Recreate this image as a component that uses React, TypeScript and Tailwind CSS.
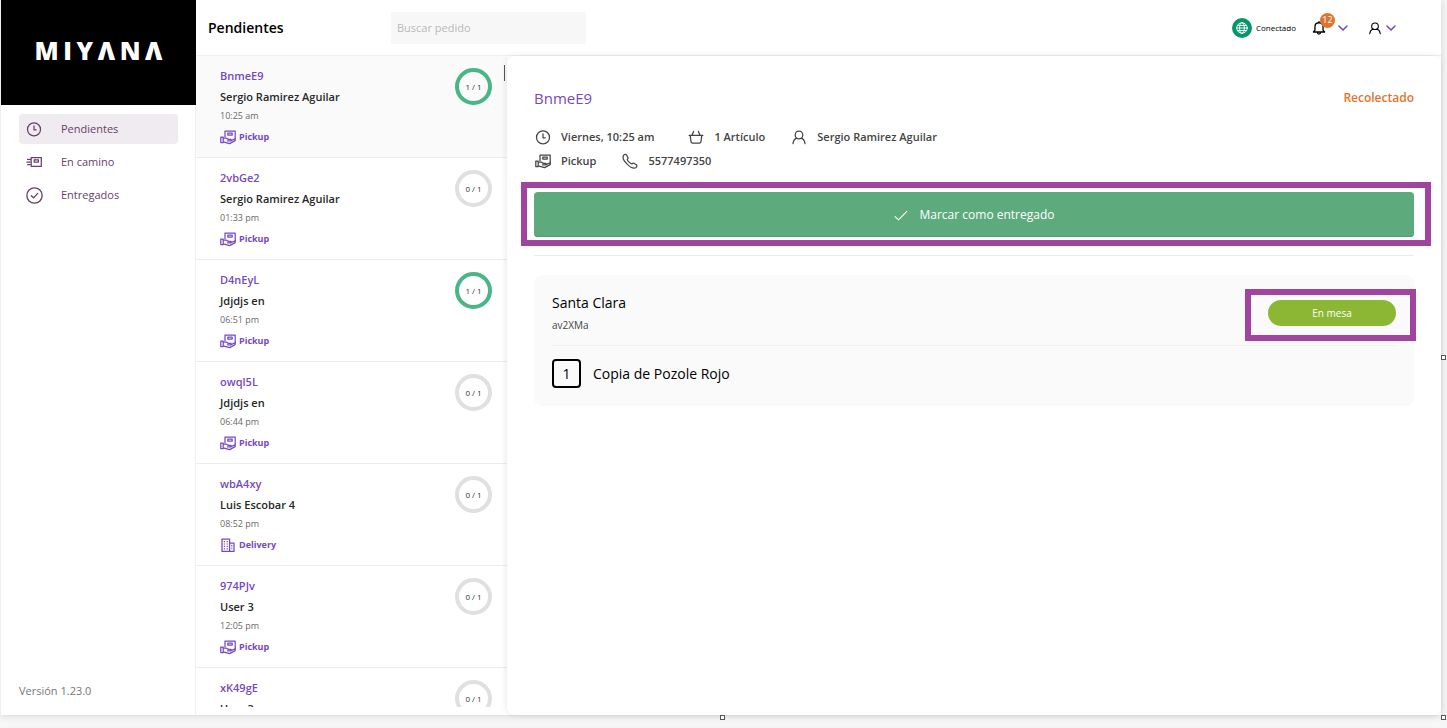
import React from "react";

type Mode = "Pickup" | "Delivery";

interface Order {
  code: string;
  name: string;
  time: string;
  mode: Mode;
  ready: number;
  total: number;
}

const orders: Order[] = [
  { code: "BnmeE9", name: "Sergio Ramirez Aguilar", time: "10:25 am", mode: "Pickup", ready: 1, total: 1 },
  { code: "2vbGe2", name: "Sergio Ramirez Aguilar", time: "01:33 pm", mode: "Pickup", ready: 0, total: 1 },
  { code: "D4nEyL", name: "Jdjdjs en", time: "06:51 pm", mode: "Pickup", ready: 1, total: 1 },
  { code: "owql5L", name: "Jdjdjs en", time: "06:44 pm", mode: "Pickup", ready: 0, total: 1 },
  { code: "wbA4xy", name: "Luis Escobar 4", time: "08:52 pm", mode: "Delivery", ready: 0, total: 1 },
  { code: "974PJv", name: "User 3", time: "12:05 pm", mode: "Pickup", ready: 0, total: 1 },
  { code: "xK49gE", name: "User 3", time: "12:05 pm", mode: "Pickup", ready: 0, total: 1 },
];

interface IconProps {
  className?: string;
  children?: React.ReactNode;
}

function Icon({ className = "size-4", children }: IconProps) {
  return (
    <svg viewBox="0 0 16 16" className={`shrink-0 ${className}`} fill="none" stroke="currentColor" strokeWidth="1.25" strokeLinecap="round" strokeLinejoin="round" aria-hidden="true">
      {children}
    </svg>
  );
}

const ClockIcon = ({ className }: IconProps) => (
  <Icon className={className}>
    <circle cx="8" cy="8.4" r="6.5" />
    <path d="M8 4.8V8.8H10.2" />
  </Icon>
);

const ShippingIcon = ({ className }: IconProps) => (
  <Icon className={className}>
    <path d="M5.2 3.5H15.3V12.4H5.2zM8.2 5.8H12.4V8H8.2zM1.6 5.4H4M.8 8H4M1.6 10.6H4" />
  </Icon>
);

const DoneIcon = ({ className }: IconProps) => (
  <Icon className={className}>
    <circle cx="8" cy="8" r="7.2" />
    <path d="M5 8.2L7.1 10.2L11 6" />
  </Icon>
);

const PickupIcon = ({ className }: IconProps) => (
  <Icon className={className}>
    <path d="M5 7.8V2H15.2V10M7.8 4.2H12.2V6H7.8z" />
    <path d="M.8 8H3.2V13.6H.8zM3.2 9H6.2L8.4 10.4H11V11.8H7.4M11 11.6L15.2 9.8V11.6L9.6 14.6L3.2 12.8" />
  </Icon>
);

const BuildingIcon = ({ className }: IconProps) => (
  <Icon className={className}>
    <path d="M2 2H9.6V14.4H2zM9.6 6H14V14.4H9.6" />
    <path strokeDasharray="1.2 1.2" strokeLinecap="butt" d="M4.4 4V13M7.2 4V13M11.8 8V13" />
  </Icon>
);

const BasketIcon = ({ className }: IconProps) => (
  <Icon className={className}>
    <path d="M1.2 6.4H14.8M2.2 6.4L3 12.6Q3.2 14 4.6 14H11.4Q12.8 14 13 12.6L13.8 6.4M4 6.2L5.6 2.4M12 6.2L10.4 2.4" />
  </Icon>
);

const PersonIcon = ({ className }: IconProps) => (
  <Icon className={className}>
    <circle cx="8" cy="6" r="3.8" />
    <path d="M2 14.6C2.4 11.6 4 9.8 5.8 9.2M14 14.6C13.6 11.6 12 9.8 10.2 9.2" />
  </Icon>
);

const PhoneIcon = ({ className }: IconProps) => (
  <Icon className={className}>
    <path d="M1.4 2.6C2.4 1.2 3.8 1 4.4 1.8L6 4.6C6.4 5.4 5.8 6 5.2 6.6C5.6 8 8.2 10.6 9.8 11C10.4 10.4 11 9.8 11.8 10.2L14.4 11.8C15.2 12.4 15 13.8 13.8 14.8C9.4 17 -.8 7 1.4 2.6Z" />
  </Icon>
);

const BellIcon = ({ className }: IconProps) => (
  <Icon className={className}>
    <path strokeWidth="1.5" d="M1.6 12.6H14.4L12.6 10.4V6.4C12.6 3.8 10.8 2 8 2S3.4 3.8 3.4 6.4V10.4ZM8 .8V2M6.2 12.8C6.2 15.6 9.8 15.6 9.8 12.8" />
  </Icon>
);

const GlobeIcon = ({ className }: IconProps) => (
  <Icon className={className}>
    <circle cx="8" cy="8" r="7" />
    <ellipse cx="8" cy="8" rx="3.2" ry="7" />
    <path d="M1 8H15M2 4.6H14M2 11.4H14" />
  </Icon>
);

const ChevronIcon = () => (
  <svg viewBox="0 0 10 6" className="h-1.5 w-2.5 shrink-0 text-[#6f42c1]" fill="none" stroke="currentColor" strokeWidth="1.5" strokeLinecap="round" strokeLinejoin="round" aria-hidden="true">
    <path d="M1 1L5 5L9 1" />
  </svg>
);

function Logo() {
  return (
    <div role="img" aria-label="Miyana" className="flex w-32 justify-between pb-1 text-[25px] leading-none font-extrabold text-white">
      {["M", "I", "Y", "Λ", "N", "Λ"].map((letter, i) => (
        <span key={i}>{letter}</span>
      ))}
    </div>
  );
}

const navItems = [
  { label: "Pendientes", icon: <ClockIcon />, active: true },
  { label: "En camino", icon: <ShippingIcon />, active: false },
  { label: "Entregados", icon: <DoneIcon className="size-[17px]" />, active: false },
];

function Sidebar() {
  return (
    <aside className="flex w-49 shrink-0 flex-col border-x border-[#efefef]">
      <div className="-mr-px flex h-[105px] items-center justify-center bg-black">
        <Logo />
      </div>
      <nav className="mt-[9px] flex flex-col gap-[3px] pr-[17px] pl-[18px]">
        {navItems.map((item) => (
          <a
            key={item.label}
            href="#"
            aria-current={item.active ? "page" : undefined}
            className={`flex h-[30px] items-center rounded text-[11px] text-[#69406a] ${item.active ? "bg-[#f0ebf0]" : ""}`}
          >
            <span className="flex w-[30px] justify-center">{item.icon}</span>
            <span className="ml-3">{item.label}</span>
          </a>
        ))}
      </nav>
      <p className="mt-auto pb-4 pl-[18px] text-[11px] text-[#777]">Versión 1.23.0</p>
    </aside>
  );
}

function Header() {
  return (
    <header className="flex h-14 shrink-0 items-center border-b border-[#efefef] pr-[45px] pl-3">
      <h1 className="w-[183px] text-sm font-semibold text-black">Pendientes</h1>
      <input
        type="search"
        aria-label="Buscar pedido"
        placeholder="Buscar pedido"
        className="h-8 w-[195px] rounded-xs bg-[#f7f7f7] px-1.5 text-[11px] outline-none placeholder:text-[#b9b9b9]"
      />
      <div className="ml-auto flex items-center">
        <span className="flex size-5 items-center justify-center rounded-full bg-[#059669] text-white">
          <GlobeIcon className="size-3" />
        </span>
        <span className="ml-1 text-[8px] text-black">Conectado</span>
        <button type="button" aria-label="Notificaciones" className="ml-4 flex items-center gap-3 text-black">
          <span className="relative">
            <BellIcon className="size-3.5" />
            <span className="absolute -top-2 left-2 flex size-[15px] items-center justify-center rounded-full bg-[#dd7430] text-[9px] text-white">12</span>
          </span>
          <ChevronIcon />
        </button>
        <button type="button" aria-label="Cuenta" className="ml-5 flex items-center gap-1 text-black">
          <PersonIcon className="size-3.5" />
          <ChevronIcon />
        </button>
      </div>
    </header>
  );
}

function OrderRow({ order, selected }: { order: Order; selected: boolean }) {
  const complete = order.ready === order.total;
  return (
    <li className={`shrink-0 border-b border-[#ececec] ${selected ? "bg-[#fafafa]" : "bg-white"}`}>
      <button type="button" className="flex w-full items-start justify-between pt-2.5 pr-[15px] pb-[11px] pl-6 text-left">
        <span className="flex flex-col">
          <span className="text-[11px] leading-5 font-semibold text-[#7549c0]">{order.code}</span>
          <span className="text-[11px] leading-[22px] font-semibold text-[#272727]">{order.name}</span>
          <span className="text-[9px] leading-4 text-[#6a6a6a]">{order.time}</span>
          <span className="mt-1 flex items-center gap-[3px] text-[9px] leading-[18px] font-bold text-[#7549c0]">
            {order.mode === "Pickup" ? <PickupIcon /> : <BuildingIcon />}
            {order.mode}
          </span>
        </span>
        <span className={`mt-0.5 flex size-[37px] items-center justify-center rounded-full border-4 text-[8px] text-[#333] ${complete ? "border-[#4ab587]" : "border-[#e0e0e0]"}`}>
          {order.ready} / {order.total}
        </span>
      </button>
    </li>
  );
}

function OrderList() {
  return (
    <section aria-label="Pedidos" className="relative mb-2 w-[311px] shrink-0 overflow-hidden">
      <ul className="flex flex-col">
        {orders.map((order, i) => (
          <OrderRow key={order.code} order={order} selected={i === 0} />
        ))}
      </ul>
      <span className="absolute top-[9px] right-0.5 h-4 w-px bg-[#555]" />
    </section>
  );
}

function Fact({ icon, children }: { icon: React.ReactNode; children: React.ReactNode }) {
  return (
    <span className="flex items-center gap-2.5">
      {icon}
      {children}
    </span>
  );
}

function OrderDetail() {
  return (
    <main className="relative min-w-0 flex-1 rounded-lg bg-white px-[27px] pt-8 shadow-[-1px_0_6px_rgba(0,0,0,0.09)]">
      <div className="flex h-5 items-center justify-between">
        <h2 className="text-[15px] text-[#7549c0]">BnmeE9</h2>
        <span className="text-xs font-semibold text-[#dd7430]">Recolectado</span>
      </div>
      <div className="mt-[17px] flex flex-col text-[11px] leading-6 font-semibold text-[#444]">
        <div className="flex gap-[26px] pl-px">
          <span className="pr-2">
            <Fact icon={<ClockIcon />}>Viernes, 10:25 am</Fact>
          </span>
          <Fact icon={<BasketIcon />}>1 Artículo</Fact>
          <Fact icon={<PersonIcon />}>Sergio Ramirez Aguilar</Fact>
        </div>
        <div className="flex gap-[26px] pl-px">
          <Fact icon={<PickupIcon />}>Pickup</Fact>
          <Fact icon={<PhoneIcon />}>5577497350</Fact>
        </div>
      </div>
      <div className="relative mt-[19px]">
        <button type="button" className="flex h-[45px] w-full items-center justify-center gap-3 rounded-sm bg-[#5daa7d] text-xs text-white shadow-[inset_0_-1px_0_#48a06d]">
          <Icon className="size-3.5">
            <path d="M1.2 9.8L5.2 13.6L14.6 3.8" />
          </Icon>
          Marcar como entregado
        </button>
        <span className="pointer-events-none absolute -top-2.5 -right-[17px] -bottom-[9px] -left-[13px] border-6 border-[#a044a0]" />
      </div>
      <hr className="mt-[18px] border-[#ececec]" />
      <section className="mt-[19px] rounded-lg bg-[#fafafa] px-[18px] pb-[18px]">
        <div className="flex h-[71px] items-start justify-between border-b border-[#f1f1f1] pt-[17px]">
          <div>
            <h3 className="text-sm leading-[22px] text-black">Santa Clara</h3>
            <p className="text-[10px] leading-[22px] text-[#444]">av2XMa</p>
          </div>
          <div className="relative mt-2">
            <button type="button" className="flex h-[26px] w-32 items-center justify-center rounded-full bg-[#8cb735] text-[10px] text-white">
              En mesa
            </button>
            <span className="pointer-events-none absolute -top-[11px] -right-5 -bottom-[15px] -left-[23px] border-6 border-[#a044a0]" />
          </div>
        </div>
        <div className="mt-[13px] flex items-center gap-3 text-sm leading-5 text-black">
          <span className="flex size-[29px] items-center justify-center rounded-sm border-2 border-black">1</span>
          Copia de Pozole Rojo
        </div>
      </section>
    </main>
  );
}

function Handle({ className }: { className: string }) {
  return <span className={`absolute size-[5px] border border-[#555] bg-white ${className}`} />;
}

export default function App() {
  return (
    <div className="relative flex h-screen overflow-hidden bg-[#f6f6f6] pr-[6px] pb-[13px] font-['Open_Sans','Noto_Sans',sans-serif]">
      <div className="flex min-w-0 flex-1 bg-white shadow-[0_0_8px_rgba(0,0,0,0.15)]">
        <Sidebar />
        <div className="flex min-w-0 flex-1 flex-col">
          <Header />
          <div className="flex min-h-0 flex-1">
            <OrderList />
            <OrderDetail />
          </div>
        </div>
      </div>
      <Handle className="top-[355px] right-px" />
      <Handle className="right-px bottom-2" />
      <Handle className="bottom-2 left-1/2 -ml-1" />
    </div>
  );
}
